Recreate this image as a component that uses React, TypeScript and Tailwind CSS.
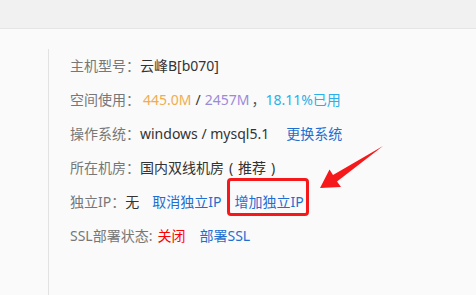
import React from "react";

const font = { fontFamily: '"Noto Sans", "Noto Sans CJK SC", sans-serif' };

function FW({ c, className = "" }: { c: string; className?: string }) {
  return <span className={"inline-block w-[14px] text-center " + className}>{c}</span>;
}

export default function App() {
  return (
    <div lang="zh-CN" className="relative w-[476px] h-[295px] overflow-hidden bg-[#fafafa] text-[14px]" style={font}>
      <div className="h-[29px] bg-[#f1f1f1] border-b border-[#e6e6e6]" />
      <div className="pl-[48px] pt-[20px] h-[266px]">
        <div className="h-full border-l border-[#e2e2e2] pl-[21px] text-[#777] leading-[34px] whitespace-nowrap">
          <div className="h-[34px]">
            主机型号<FW c="：" /><span className="text-[#333]">云峰B[b070]</span>
          </div>
          <div className="h-[34px]">
            空间使用<FW c="：" />
            <span className="ml-[3px] text-[#f0ad4e]">445.0M</span>
            <span className="ml-[4px] text-[#333]">/</span>
            <span className="ml-[4px] text-[#9b8ad8]">2457M</span>
            <span className="ml-[2px] inline-block w-[14px] text-left text-[#555]">，</span>
            <span className="text-[#2ab0e8]">18.11%已用</span>
          </div>
          <div className="h-[34px]">
            操作系统<FW c="：" /><span className="text-[#333]">windows / mysql5.1</span>
            <span className="ml-[17px] text-[#1f6fd0]">更换系统</span>
          </div>
          <div className="h-[34px]">
            所在机房<FW c="：" />
            <span className="text-[#333]">
              国内双线机房<FW c="(" />推荐<FW c=")" />
            </span>
          </div>
          <div className="h-[34px]">
            独立IP<FW c="：" />
            <span className="text-[#333]">无</span>
            <span className="ml-[13px] text-[#1f6fd0]">取消独立IP</span>
            <span className="relative inline-block ml-[13px] text-[#1f6fd0]">
              增加独立IP
              <span className="absolute -left-[7px] -right-[5px] -top-[7px] bottom-[3px] border-[3px] border-[#f5191b] rounded-[4px]" />
            </span>
          </div>
          <div className="h-[34px]">
            SSL部署状态:<span className="ml-[5px] text-[#ff0000]">关闭</span>
            <span className="ml-[14px] text-[#1f6fd0]">部署SSL</span>
          </div>
        </div>
      </div>
      <svg className="absolute left-0 top-0" width="476" height="295" viewBox="0 0 476 295">
        <polygon
          points="383,146 337,181.5 341,187 320,188 329.5,169.5 333,175"
          fill="#f5191b"
        />
      </svg>
    </div>
  );
}
